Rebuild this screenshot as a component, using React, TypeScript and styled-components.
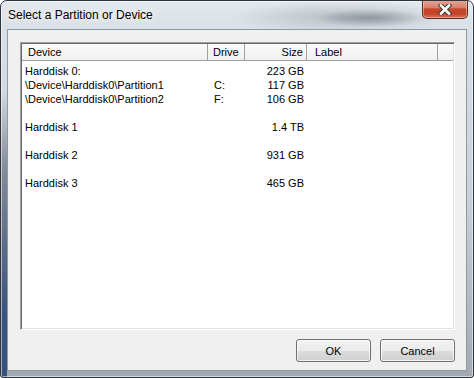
import * as React from "react"
import styled, { createGlobalStyle } from "styled-components"

const GlobalStyle = createGlobalStyle`
  html, body {
    margin: 0;
    padding: 0;
    background: #ffffff;
  }
  body {
    font-family: "Liberation Sans", Arial, sans-serif;
  }
`

type Row = { device: string; drive?: string; size?: string }

const rows: Row[] = [
  { device: "Harddisk 0:", size: "223 GB" },
  { device: "\\Device\\Harddisk0\\Partition1", drive: "C:", size: "117 GB" },
  { device: "\\Device\\Harddisk0\\Partition2", drive: "F:", size: "106 GB" },
  { device: "" },
  { device: "Harddisk 1", size: "1.4 TB" },
  { device: "" },
  { device: "Harddisk 2", size: "931 GB" },
  { device: "" },
  { device: "Harddisk 3", size: "465 GB" },
]

function CloseGlyph() {
  return (
    <svg width="14" height="11" viewBox="0 0 14 11">
      <path d="M3 1.5 L11 9.5 M11 1.5 L3 9.5" stroke="#3b3b3b" strokeWidth="4.6" strokeLinecap="square" />
      <path d="M3 1.5 L11 9.5 M11 1.5 L3 9.5" stroke="#ffffff" strokeWidth="2.6" strokeLinecap="square" />
    </svg>
  )
}

function App() {
  return (
    <>
      <GlobalStyle />
      <Window>
        <TitleBar>
          <Title>Select a Partition or Device</Title>
          <CloseButton>
            <CloseGlyph />
          </CloseButton>
        </TitleBar>
        <Client>
          <ListView>
            <Header>
              <HeadCell $pad="0 0 0 6px">Device</HeadCell>
              <HeadCell $pad="0 0 0 5px">Drive</HeadCell>
              <HeadCell $pad="0 3px 0 0" $right>Size</HeadCell>
              <HeadCell $pad="0 0 0 8px">Label</HeadCell>
              <HeadFiller />
            </Header>
            <Rows>
              {rows.map((r, i) => (
                <ListRow key={i}>
                  <Cell $pad="0 0 0 3px">{r.device}</Cell>
                  <Cell $pad="0 0 0 6px">{r.drive}</Cell>
                  <Cell $pad="0 3px 0 0" $right>{r.size}</Cell>
                  <Cell $pad="0 0 0 8px" />
                </ListRow>
              ))}
            </Rows>
          </ListView>
          <ButtonRow>
            <DialogButton>OK</DialogButton>
            <DialogButton>Cancel</DialogButton>
          </ButtonRow>
        </Client>
      </Window>
    </>
  )
}
export default App

const COLUMNS = "186px 37px 62px 131px 1fr"

const Window = styled.div`
  width: 474px;
  height: 378px;
  box-sizing: border-box;
  display: flex;
  flex-direction: column;
  border: 1px solid #30353c;
  border-radius: 7px 7px 3px 3px;
  overflow: hidden;
  background:
    radial-gradient(ellipse 55px 9px at 370px 17px, rgba(70, 76, 84, 0.4), rgba(70, 76, 84, 0) 100%),
    radial-gradient(ellipse 110px 16px at 340px 16px, rgba(90, 96, 104, 0.28), rgba(90, 96, 104, 0) 100%),
    linear-gradient(180deg, rgba(0, 0, 0, 0) 90px, rgba(70, 80, 100, 0.55) 170px, rgba(35, 65, 115, 0.85) 320px) left top / 6px 100% no-repeat,
    linear-gradient(180deg, #e3e8ee 0px, #d9dfe6 30px, #c8cfd7 200px, #a3a9b0 100%);
  box-shadow: inset 0 0 0 1px rgba(255, 255, 255, 0.55);
`

const TitleBar = styled.div`
  height: 28px;
  display: flex;
  align-items: flex-start;
  padding-left: 7px;
  padding-right: 5px;
`

const Title = styled.div`
  margin-top: 7px;
  font-size: 12px;
  line-height: 15px;
  color: #000;
  text-shadow: 0 0 6px rgba(255, 255, 255, 0.95), 0 0 10px rgba(255, 255, 255, 0.8);
`

const CloseButton = styled.div`
  margin-left: auto;
  margin-top: -1px;
  width: 46px;
  height: 19px;
  box-sizing: border-box;
  display: flex;
  align-items: center;
  justify-content: center;
  border: 1px solid #5b2a22;
  border-top: none;
  border-radius: 0 0 5px 5px;
  background: linear-gradient(180deg, #e8a797 0%, #d9806b 42%, #c7472a 50%, #c4432a 75%, #d8735a 100%);
  box-shadow: inset 0 0 0 1px rgba(255, 220, 210, 0.45);
`

const Client = styled.div`
  flex: 1;
  margin: 0 6px 6px 6px;
  display: flex;
  flex-direction: column;
  padding: 12px 11px 8px 12px;
  background: #f0f0f0;
  border: 1px solid #8e99a6;
`

const ListView = styled.div`
  flex: 1;
  display: flex;
  flex-direction: column;
  background: #ffffff;
  border-style: solid;
  border-width: 1px;
  border-color: #a0a0a0 #ffffff #ffffff #a0a0a0;
  box-shadow: inset 1px 1px 0 #696969, inset -1px -1px 0 #e3e3e3;
  font-size: 11px;
  color: #000;
`

const Header = styled.div`
  display: grid;
  grid-template-columns: ${COLUMNS};
  height: 16px;
  margin: 1px 1px 0 1px;
  background: linear-gradient(180deg, #fbfbfb 0%, #f0f0f0 100%);
  border-bottom: 1px solid #a0a0a0;
`

const HeadCell = styled.div<{ $pad: string; $right?: boolean }>`
  padding: ${(p) => p.$pad};
  text-align: ${(p) => (p.$right ? "right" : "left")};
  line-height: 16px;
  border-right: 1px solid #a0a0a0;
  white-space: nowrap;
  overflow: hidden;
`

const HeadFiller = styled.div``

const Rows = styled.div`
  padding-top: 3px;
  margin-left: 1px;
`

const ListRow = styled.div`
  display: grid;
  grid-template-columns: ${COLUMNS};
  height: 14px;
`

const Cell = styled.div<{ $pad: string; $right?: boolean }>`
  padding: ${(p) => p.$pad};
  text-align: ${(p) => (p.$right ? "right" : "left")};
  line-height: 14px;
  white-space: nowrap;
  overflow: hidden;
`

const ButtonRow = styled.div`
  display: flex;
  justify-content: flex-end;
  gap: 9px;
  margin-top: 9px;
`

const DialogButton = styled.button`
  width: 75px;
  height: 23px;
  padding: 0;
  font-family: "Liberation Sans", Arial, sans-serif;
  font-size: 11px;
  color: #000;
  border: 1px solid #707070;
  border-radius: 3px;
  background: linear-gradient(180deg, #f2f2f2 0%, #ebebeb 50%, #dddddd 50%, #cfcfcf 100%);
  box-shadow: inset 0 0 0 1px rgba(255, 255, 255, 0.75);
`
